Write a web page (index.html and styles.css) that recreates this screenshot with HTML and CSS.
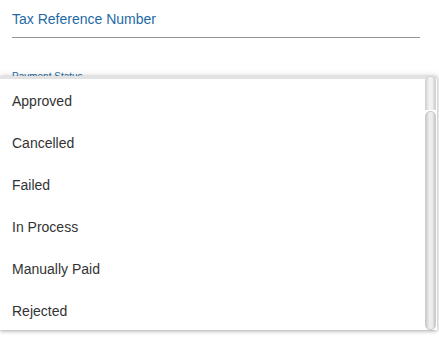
FILE: index.html
```html
<!DOCTYPE html>
<html>
<head>
<meta charset="utf-8">
<link rel="stylesheet" href="styles.css">
</head>
<body>
<div class="page">
  <div class="field">
    <div class="field-value">Tax Reference Number</div>
  </div>
  <div class="field2">
    <div class="field-label">Payment Status</div>
  </div>
  <div class="menu">
    <ul class="options">
      <li>Approved</li>
      <li>Cancelled</li>
      <li>Failed</li>
      <li>In Process</li>
      <li>Manually Paid</li>
      <li>Rejected</li>
    </ul>
    <div class="scrollbar">
      <div class="sb-top"></div>
      <div class="sb-track"></div>
    </div>
  </div>
</div>
</body>
</html>
```
FILE: styles.css
```css
html, body {
  margin: 0;
  padding: 0;
  background: #fff;
  font-family: Arial, "Liberation Sans", sans-serif;
}
.page {
  position: relative;
  width: 439px;
  height: 337px;
  overflow: hidden;
}
.field {
  margin: 0 19px 0 12px;
  padding-top: 10px;
  height: 27px;
  border-bottom: 1px solid #949494;
}
.field-value {
  font-size: 14px;
  line-height: 18px;
  color: #1f6aa5;
}
.field2 {
  margin: 0 12px;
  padding-top: 33px;
}
.field-label {
  font-size: 10px;
  line-height: 12px;
  color: #1f6aa5;
}
.menu {
  position: absolute;
  left: 0;
  top: 76px;
  width: 437px;
  height: 254px;
  background: #fff;
  box-shadow: 0 1px 4px rgba(0,0,0,0.35), 0 -3px 6px rgba(0,0,0,0.04);
  border-top: 3px solid #e2e2e2;
  box-sizing: border-box;
  display: flex;
}
.options {
  list-style: none;
  margin: 0;
  padding: 0;
  flex: 1;
}
.options li {
  height: 42px;
  line-height: 42px;
  padding-left: 12px;
  font-size: 14px;
  color: #333;
}
.options li:first-child {
  margin-top: 1px;
}
.scrollbar {
  width: 11px;
  margin-top: -3px;
  display: flex;
  flex-direction: column;
  gap: 1px;
  padding-right: 1px;
}
.sb-top {
  height: 33px;
  border-radius: 5px 5px 0 0;
  background: linear-gradient(to right, #d6d6d6, #f4f4f4 40%, #f0f0f0 70%, #cfcfcf);
  border: 1px solid #d2d2d2;
  border-bottom: none;
}
.sb-track {
  flex: 1;
  border-radius: 5px;
  background: linear-gradient(to right, #cdcdcd, #efefef 40%, #ececec 70%, #c8c8c8);
  border: 1px solid #cbcbcb;
  margin-bottom: 0;
}
```
